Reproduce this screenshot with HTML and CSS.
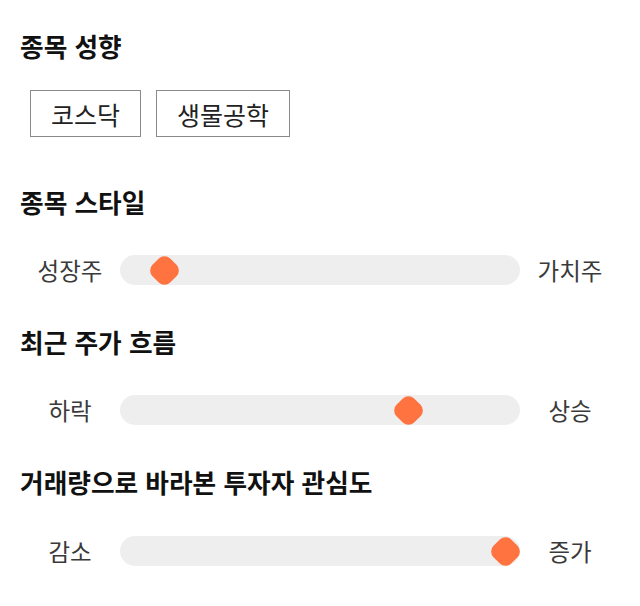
FILE: index.html
```html
<!DOCTYPE html>
<html lang="ko">
<head>
<meta charset="utf-8">
<link rel="stylesheet" href="styles.css">
</head>
<body>
<div class="page">
  <section class="sec sec-tags">
    <h2 class="title">종목 성향</h2>
    <div class="tags">
      <span class="tag">코스닥</span>
      <span class="tag">생물공학</span>
    </div>
  </section>
  <section class="sec">
    <h2 class="title">종목 스타일</h2>
    <div class="slider">
      <span class="lbl">성장주</span>
      <div class="track"><span class="thumb" style="--v:0.08"></span></div>
      <span class="lbl">가치주</span>
    </div>
  </section>
  <section class="sec">
    <h2 class="title">최근 주가 흐름</h2>
    <div class="slider">
      <span class="lbl">하락</span>
      <div class="track"><span class="thumb" style="--v:0.74"></span></div>
      <span class="lbl">상승</span>
    </div>
  </section>
  <section class="sec sec-last">
    <h2 class="title">거래량으로 바라본 투자자 관심도</h2>
    <div class="slider">
      <span class="lbl">감소</span>
      <div class="track"><span class="thumb" style="--v:1"></span></div>
      <span class="lbl">증가</span>
    </div>
  </section>
</div>
</body>
</html>
```

FILE: styles.css
```css
* { box-sizing: border-box; }
html, body { margin: 0; padding: 0; background: #fff; }
body {
  font-family: "Noto Sans CJK KR", "Noto Sans", sans-serif;
  color: #222;
}
.page {
  padding: 29px 20px 0 20px;
  display: flex;
  flex-direction: column;
}
.sec { margin-bottom: 40px; }
.sec-tags { margin-bottom: 48px; }
.title {
  margin: 0 0 36px 0;
  font-size: 25.7px;
  line-height: 34px;
  height: 34px;
  font-weight: 700;
  color: #111;
  white-space: nowrap;
}
.sec-tags .title { margin-bottom: 27px; }
.sec-last .title { margin-bottom: 37px; }
.tags {
  display: flex;
  gap: 15px;
  padding-left: 10px;
}
.tag {
  display: flex;
  align-items: center;
  height: 47px;
  padding: 0 20px;
  border: 1px solid #8a8a8a;
  font-size: 25px;
  color: #222;
}
.slider {
  display: flex;
  align-items: center;
  height: 30px;
}
.lbl {
  width: 100px;
  text-align: center;
  font-size: 23.5px;
  color: #3a3a3a;
}
.track {
  position: relative;
  width: 400px;
  height: 30px;
  background: #eeeeee;
  border-radius: 15px;
}
.thumb {
  position: absolute;
  top: 50%;
  left: calc(15px + var(--v) * 370px);
  width: 25px;
  height: 25px;
  margin: -12.5px 0 0 -12.5px;
  background: #ff7340;
  border-radius: 8px;
  transform: rotate(45deg);
}
```
